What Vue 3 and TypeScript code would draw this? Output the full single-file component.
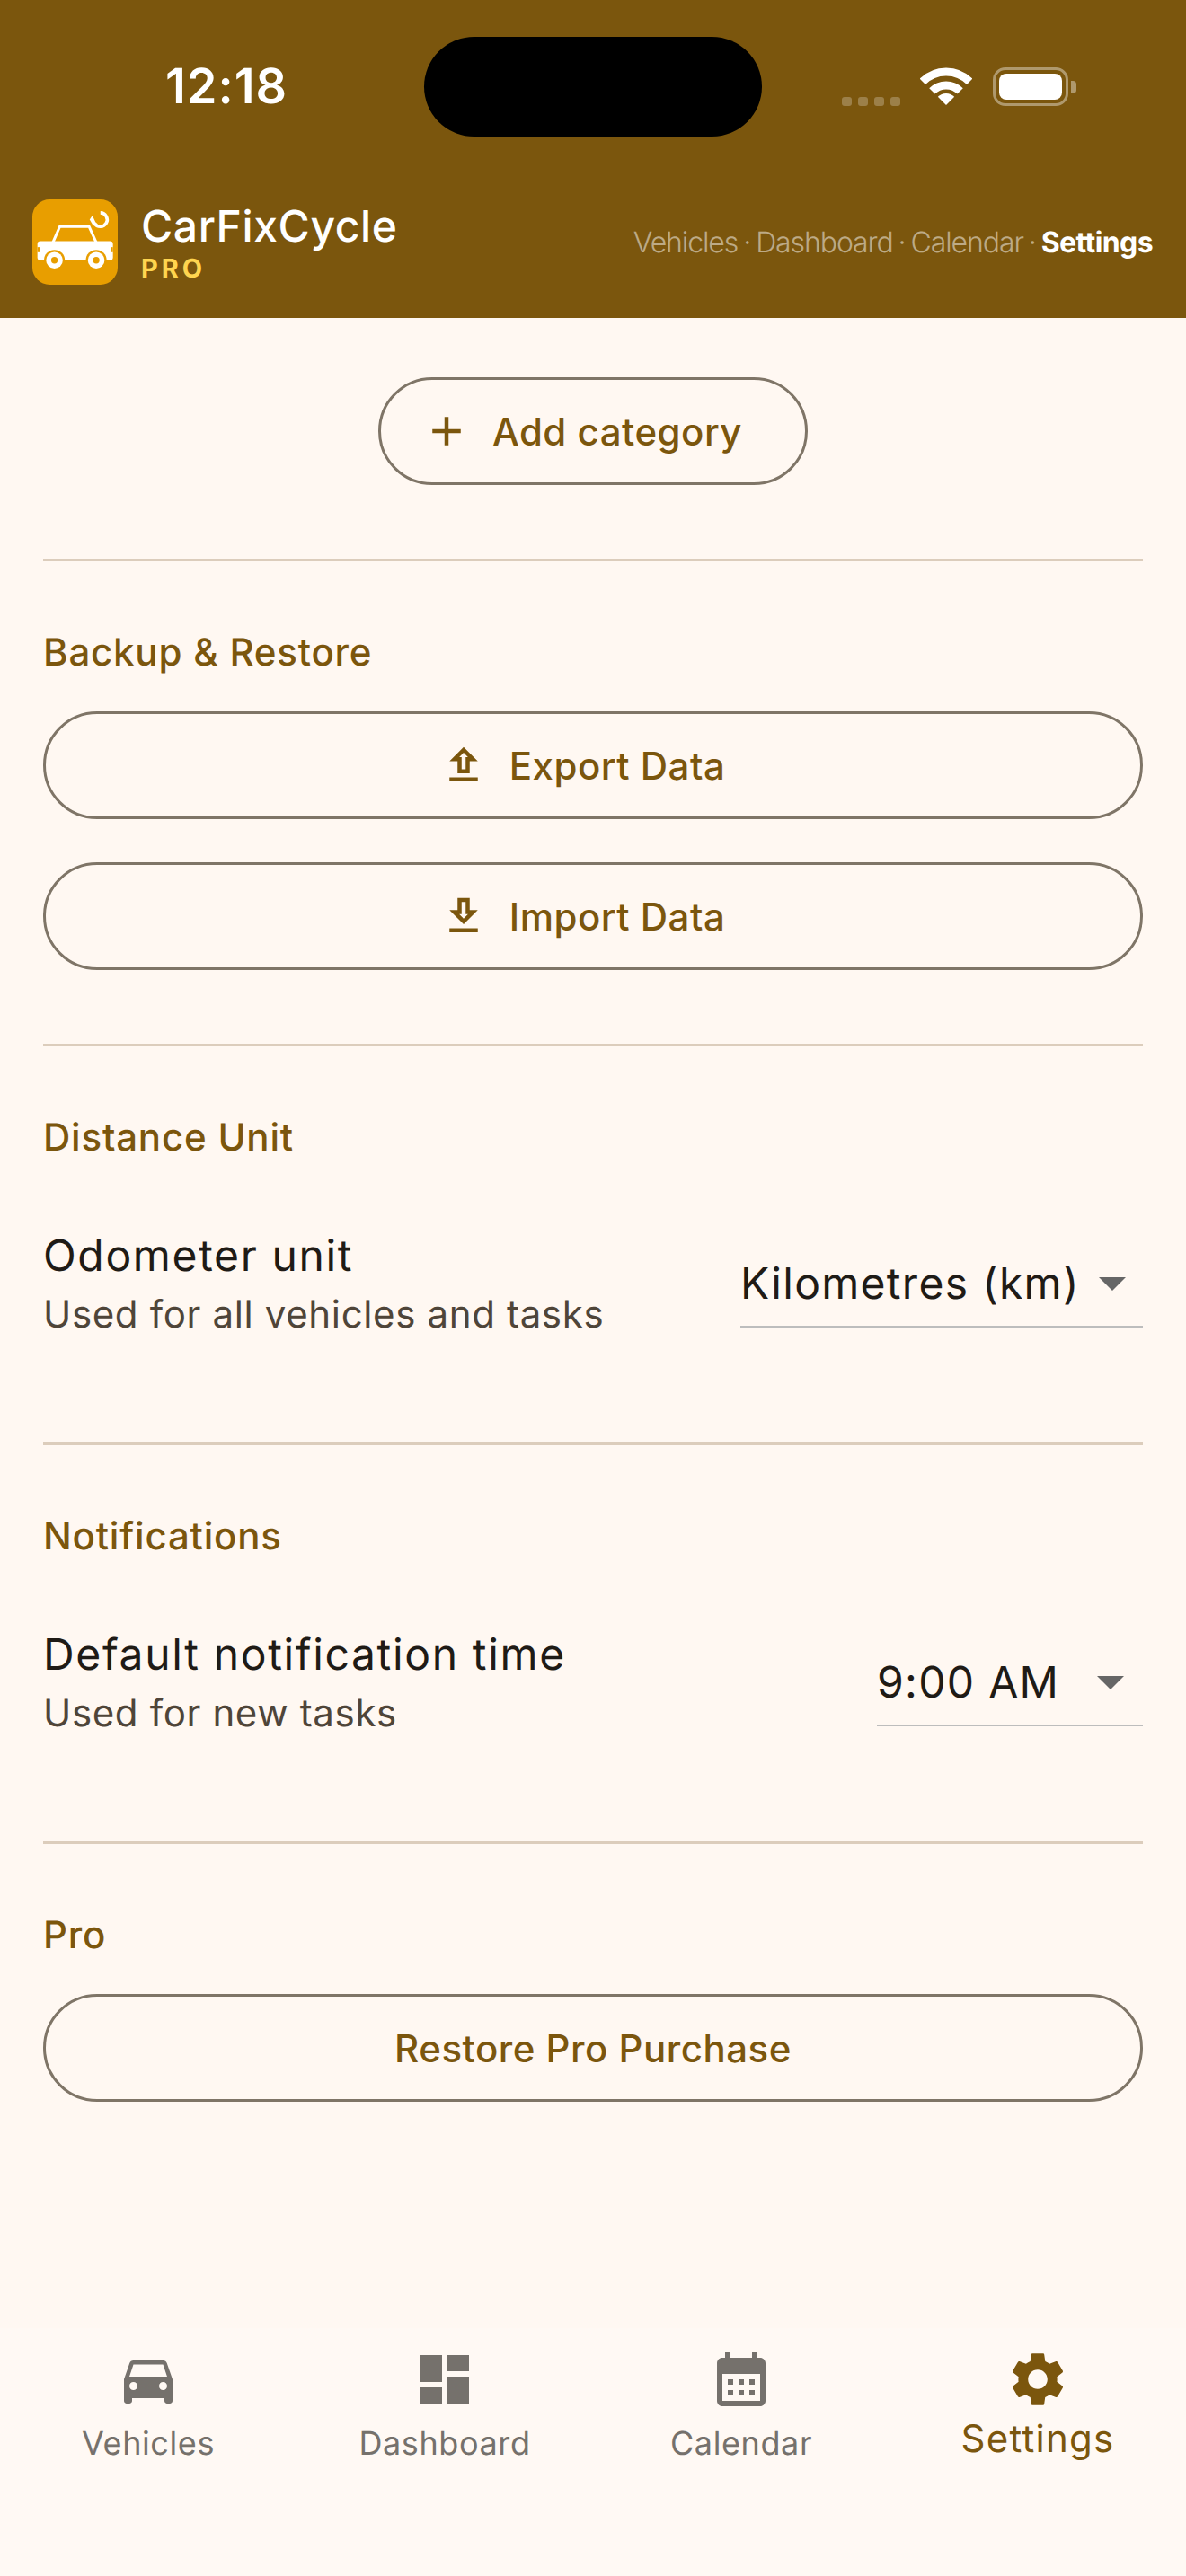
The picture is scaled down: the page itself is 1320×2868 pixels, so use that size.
<template>
  <div class="page">
    <header class="top">
      <!-- status bar -->
      <div class="status">
        <span class="clock">12:18</span>
        <div class="island"></div>
        <div class="status-right">
          <div class="dots"><i v-for="n in 4" :key="n"></i></div>
          <svg class="wifi" width="58" height="42" viewBox="0 0 58 42" fill="none" stroke="#fff" stroke-width="9">
            <path d="M2.8 15.8A37 37 0 0 1 55.2 15.8" />
            <path d="M13.4 26.4A22 22 0 0 1 44.6 26.4" />
            <path d="M29 42L19.8 32.8A13 13 0 0 1 38.2 32.8Z" fill="#fff" stroke="none" />
          </svg>
          <div class="battery"><div class="battery-fill"></div></div>
          <div class="battery-cap"></div>
        </div>
      </div>

      <!-- app bar -->
      <div class="appbar">
        <div class="brand">
          <svg class="logo" width="95" height="95" viewBox="48 36 286 286">
            <rect x="48" y="36" width="286" height="286" rx="58" fill="#e89e00" />
            <path d="M117 180L140 127H238L262 180" fill="none" stroke="#fff" stroke-width="9" />
            <rect x="65" y="176" width="253" height="64" rx="10" fill="#fff" />
            <rect x="65" y="196" width="8" height="17" fill="#e89e00" />
            <rect x="310" y="196" width="8" height="17" fill="#e89e00" />
            <g v-for="cx in [122, 262]" :key="cx">
              <circle :cx="cx" cy="240" r="35" fill="#e89e00" />
              <circle :cx="cx" cy="240" r="28" fill="#fff" />
              <circle :cx="cx" cy="240" r="11" fill="#e89e00" />
            </g>
            <path d="M276 81A23 23 0 1 1 256 116" fill="none" stroke="#fff" stroke-width="11" />
            <path d="M240 104L249 90L264 122L252 124Z" fill="#fff" />
          </svg>
          <div class="brand-text">
            <div class="brand-name">CarFixCycle</div>
            <div class="brand-pro">PRO</div>
          </div>
        </div>
        <div class="crumbs">
          <template v-for="(t, i) in tabs" :key="t.label">
            <span v-if="i > 0" class="crumb-dot">·</span>
            <span :class="{ 'crumb-on': t.active }">{{ t.label }}</span>
          </template>
        </div>
      </div>
    </header>

    <main class="content">
      <div class="add-wrap">
        <button class="btn">
          <svg class="btn-icon" viewBox="0 0 24 24"><path d="M19 13h-6v6h-2v-6H5v-2h6V5h2v6h6v2z" /></svg>
          Add category
        </button>
      </div>

      <section class="sec">
        <h3 class="sec-title">Backup &amp; Restore</h3>
        <div class="btn-stack">
          <button class="btn btn-wide">
            <svg class="btn-icon" viewBox="0 0 24 24"><path d="M9 16h6v-6h4l-7-7-7 7h4v6zm3-10.17L14.17 8H13v6h-2V8H9.83L12 5.83zM5 18h14v2H5z" /></svg>
            Export Data
          </button>
          <button class="btn btn-wide">
            <svg class="btn-icon" viewBox="0 0 24 24"><path d="M19 9h-4V3H9v6H5l7 7 7-7zm-8 2V5h2v6h1.17L12 13.17 9.83 11H11zm-6 7h14v2H5z" /></svg>
            Import Data
          </button>
        </div>
      </section>

      <section v-for="s in selects" :key="s.heading" class="sec">
        <h3 class="sec-title sec-title-row">{{ s.heading }}</h3>
        <div class="row">
          <div>
            <div class="row-title">{{ s.title }}</div>
            <div class="row-sub">{{ s.sub }}</div>
          </div>
          <div class="dropdown" :class="s.cls">
            <span class="dropdown-value">{{ s.value }}</span>
            <svg class="dropdown-arrow" viewBox="0 0 24 24"><path d="M7 10l5 5 5-5z" /></svg>
          </div>
        </div>
      </section>

      <section class="sec">
        <h3 class="sec-title">Pro</h3>
        <button class="btn btn-wide btn-plain">Restore Pro Purchase</button>
      </section>
    </main>

    <nav class="bottom">
      <div v-for="t in tabs" :key="t.label" class="tab" :class="{ 'tab-on': t.active }">
        <svg class="tab-icon" viewBox="0 0 24 24"><path :d="t.icon" /></svg>
        <span class="tab-label">{{ t.label }}</span>
      </div>
    </nav>
  </div>
</template>

<script setup lang="ts">
interface Tab {
  label: string;
  icon: string;
  active?: boolean;
}

const tabs: Tab[] = [
  {
    label: "Vehicles",
    icon: "M18.92 6.01C18.72 5.42 18.16 5 17.5 5h-11c-.66 0-1.21.42-1.42 1.01L3 12v8c0 .55.45 1 1 1h1c.55 0 1-.45 1-1v-1h12v1c0 .55.45 1 1 1h1c.55 0 1-.45 1-1v-8l-2.08-5.99zM6.5 16c-.83 0-1.5-.67-1.5-1.5S5.67 13 6.5 13s1.5.67 1.5 1.5S7.33 16 6.5 16zm11 0c-.83 0-1.5-.67-1.5-1.5s.67-1.5 1.5-1.5 1.5.67 1.5 1.5-.67 1.5-1.5 1.5zM5 11l1.5-4.5h11L19 11H5z",
  },
  {
    label: "Dashboard",
    icon: "M3 13h8V3H3v10zm0 8h8v-6H3v6zm10 0h8V11h-8v10zm0-18v6h8V3h-8z",
  },
  {
    label: "Calendar",
    icon: "M19 4h-1V2h-2v2H8V2H6v2H5c-1.11 0-1.99.9-1.99 2L3 20c0 1.1.89 2 2 2h14c1.1 0 2-.9 2-2V6c0-1.1-.9-2-2-2zm0 16H5V10h14v10zM9 14H7v-2h2v2zm4 0h-2v-2h2v2zm4 0h-2v-2h2v2zm-8 4H7v-2h2v2zm4 0h-2v-2h2v2zm4 0h-2v-2h2v2z",
  },
  {
    label: "Settings",
    active: true,
    icon: "M19.14 12.94c.04-.3.06-.61.06-.94 0-.32-.02-.64-.07-.94l2.03-1.58c.18-.14.23-.41.12-.61l-1.92-3.32c-.12-.22-.37-.29-.59-.22l-2.39.96c-.5-.38-1.03-.7-1.62-.94L14.4 2.81c-.04-.24-.24-.41-.48-.41h-3.84c-.24 0-.43.17-.47.41L9.25 5.35c-.59.24-1.13.57-1.62.94l-2.39-.96c-.22-.08-.47 0-.59.22L2.74 8.87c-.12.21-.08.47.12.61l2.03 1.58c-.05.3-.09.63-.09.94s.02.64.07.94l-2.03 1.58c-.18.14-.23.41-.12.61l1.92 3.32c.12.22.37.29.59.22l2.39-.96c.5.38 1.03.7 1.62.94l.36 2.54c.05.24.24.41.48.41h3.84c.24 0 .44-.17.47-.41l.36-2.54c.59-.24 1.13-.56 1.62-.94l2.39.96c.22.08.47 0 .59-.22l1.92-3.32c.12-.22.07-.47-.12-.61l-2.01-1.58zM12 15.6c-1.98 0-3.6-1.62-3.6-3.6s1.62-3.6 3.6-3.6 3.6 1.62 3.6 3.6-1.62 3.6-3.6 3.6z",
  },
];

const selects = [
  {
    heading: "Distance Unit",
    title: "Odometer unit",
    sub: "Used for all vehicles and tasks",
    value: "Kilometres (km)",
    cls: "dropdown-unit",
  },
  {
    heading: "Notifications",
    title: "Default notification time",
    sub: "Used for new tasks",
    value: "9:00 AM",
    cls: "dropdown-time",
  },
];
</script>

<style>
html,
body {
  margin: 0;
  background: #fff8f2;
}
</style>

<style scoped>
.page {
  height: 2868px;
  display: flex;
  flex-direction: column;
  background: #fff8f2;
  font-family: Inter, "Noto Sans", sans-serif;
  text-rendering: geometricPrecision;
  overflow: hidden;
}

/* header */
.top {
  height: 354px;
  box-sizing: border-box;
  padding-top: 41px;
  background: #7b560d;
  color: #fff;
}

.status {
  display: grid;
  grid-template-columns: 472px 376px 472px;
  height: 111px;
  align-items: center;
}

.clock {
  padding-left: 184px;
  font-size: 54px;
  font-weight: 600;
  letter-spacing: 1px;
}

.island {
  height: 111px;
  border-radius: 56px;
  background: #000;
}

.status-right {
  display: flex;
  align-items: flex-end;
  padding-left: 89px;
  height: 43px;
}

.dots {
  display: flex;
  gap: 7px;
  margin-right: 22px;
}

.dots i {
  width: 11px;
  height: 10px;
  border-radius: 3px;
  background: rgba(255, 255, 255, 0.25);
}

.wifi {
  display: block;
  margin-right: 23px;
  margin-bottom: 1px;
}

.battery {
  width: 84px;
  height: 43px;
  box-sizing: border-box;
  border: 3px solid rgba(255, 255, 255, 0.4);
  border-radius: 14px;
  padding: 4px;
}

.battery-fill {
  height: 100%;
  border-radius: 8px;
  background: #fff;
}

.battery-cap {
  width: 6px;
  height: 14px;
  margin: 0 0 14px 3px;
  border-radius: 0 4px 4px 0;
  background: rgba(255, 255, 255, 0.4);
}

.appbar {
  display: flex;
  justify-content: space-between;
  align-items: center;
  margin-top: 70px;
  padding: 0 37px 0 36px;
}

.brand {
  display: flex;
  align-items: center;
  gap: 26px;
}

.logo {
  display: block;
}

.brand-name {
  font-size: 48px;
  line-height: 58px;
  font-weight: 500;
  letter-spacing: 0.6px;
}

.brand-pro {
  font-size: 29px;
  line-height: 36px;
  font-weight: 700;
  letter-spacing: 4px;
  color: #ffd54f;
}

.crumbs {
  display: flex;
  align-items: baseline;
  font-size: 32px;
  font-weight: 300;
  letter-spacing: -1.1px;
  white-space: pre;
  color: rgba(255, 255, 255, 0.5);
}

.crumb-dot {
  padding: 0 6px;
}

.crumb-on {
  font-weight: 700;
  letter-spacing: -0.6px;
  color: #fff;
}

/* body */
.content {
  flex: 1;
  padding: 66px 48px 0 48px;
}

.add-wrap {
  display: flex;
  justify-content: center;
  padding-bottom: 82px;
}

.btn {
  display: inline-flex;
  align-items: center;
  justify-content: center;
  gap: 24px;
  height: 120px;
  box-sizing: border-box;
  padding: 0 70px 0 46px;
  border: 3px solid #7f7567;
  border-radius: 60px;
  background: transparent;
  color: #7b560d;
  font-family: inherit;
  font-size: 42px;
  font-weight: 470;
  letter-spacing: 0.5px;
}

.btn-stack {
  display: flex;
  flex-direction: column;
  gap: 48px;
  padding-bottom: 82px;
}

.btn-wide {
  display: flex;
  width: 100%;
}

.btn-plain {
  padding: 0 72px;
}

.btn-icon {
  width: 54px;
  height: 54px;
  fill: #7b560d;
}

.sec {
  border-top: 3px solid #dccdbc;
  padding-top: 72px;
}

.sec-title {
  margin: 0 0 35px;
  font-size: 42px;
  line-height: 60px;
  font-weight: 470;
  letter-spacing: 0.8px;
  color: #7b560d;
}

.sec-title-row {
  margin-bottom: 65px;
}

.row {
  display: flex;
  justify-content: space-between;
  align-items: center;
  margin-bottom: 112px;
}

.row-title {
  font-size: 48px;
  line-height: 72px;
  letter-spacing: 1.65px;
  color: #1f1b16;
}

.row-sub {
  font-size: 42px;
  line-height: 60px;
  letter-spacing: 0.65px;
  color: #4f4539;
}

.dropdown {
  display: flex;
  align-items: center;
  justify-content: space-between;
  height: 86px;
  margin-top: 14px;
  box-sizing: border-box;
  padding-bottom: 12px;
  border-bottom: 2px solid #bdbdbd;
}

.dropdown-unit {
  width: 448px;
}

.dropdown-time {
  width: 296px;
}

.dropdown-value {
  font-size: 48px;
  letter-spacing: 1.3px;
  color: #1f1b16;
  white-space: nowrap;
}

.dropdown-arrow {
  width: 72px;
  height: 72px;
  flex-shrink: 0;
  fill: #666;
}

/* bottom nav */
.bottom {
  display: grid;
  grid-template-columns: repeat(4, 1fr);
  height: 276px;
  box-sizing: border-box;
  padding-top: 21px;
  background: #fff9f4;
}

.tab {
  display: flex;
  flex-direction: column;
  align-items: center;
  color: #75716c;
}

.tab-icon {
  width: 72px;
  height: 72px;
  fill: #75716c;
}

.tab-label {
  margin-top: 8px;
  font-size: 36px;
  line-height: 54px;
  letter-spacing: 0.6px;
}

.tab-on {
  color: #7b560d;
}

.tab-on .tab-icon {
  fill: #7b560d;
}

.tab-on .tab-label {
  margin-top: 1px;
  font-size: 42px;
  line-height: 60px;
  letter-spacing: 1.3px;
}
</style>
